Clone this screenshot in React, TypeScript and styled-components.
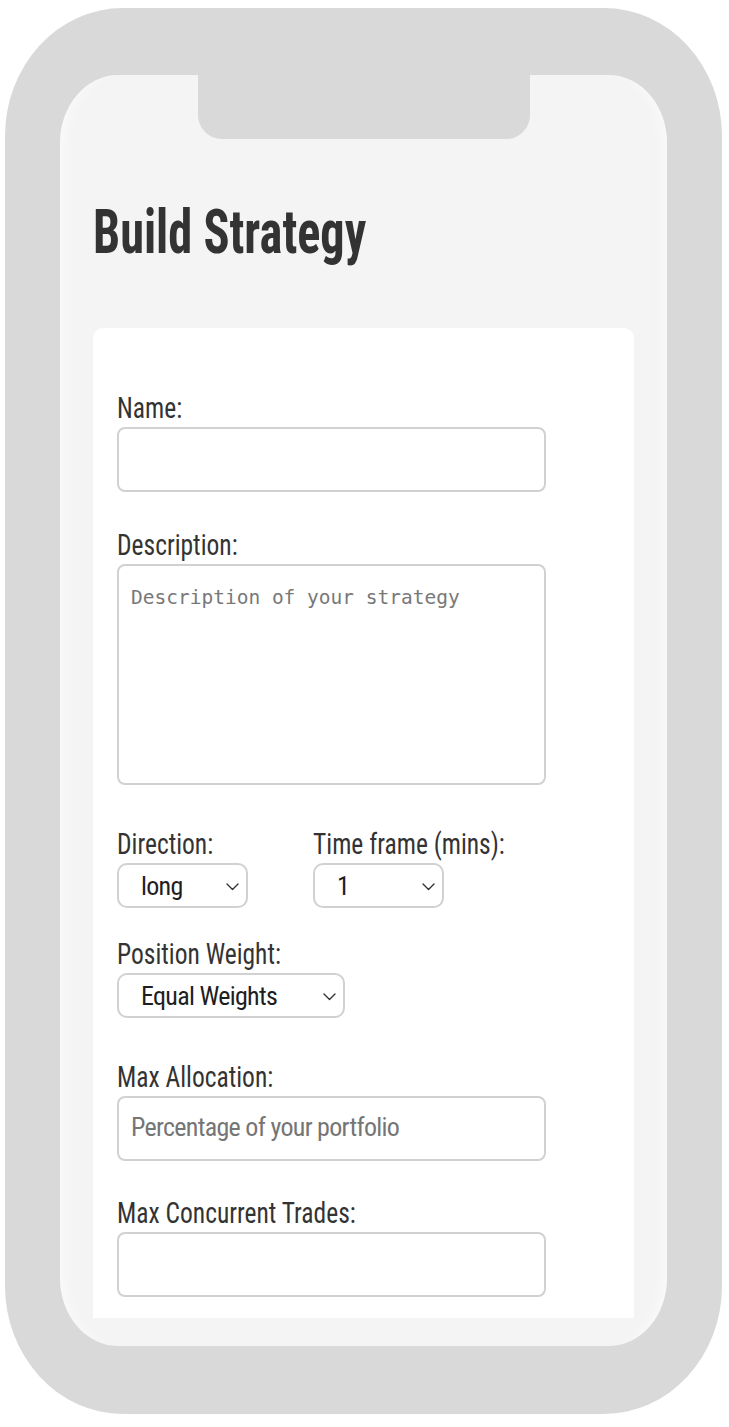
import React from "react";
import styled, { createGlobalStyle } from "styled-components";

const GlobalStyle = createGlobalStyle`
  html, body {
    margin: 0;
    padding: 0;
    background: #ffffff;
  }
  body {
    font-family: Roboto, "Liberation Sans", sans-serif;
    color: #333333;
  }
  * {
    box-sizing: border-box;
  }
`;

const Phone = styled.div`
  width: 717px;
  margin: 8px 0 0 5px;
  padding: 67px 55px 68px;
  background: #d9d9d9;
  border-radius: 118px / 128px;
`;

const Screen = styled.div`
  position: relative;
  display: flex;
  flex-direction: column;
  height: 1271px;
  padding-bottom: 28px;
  background: #f4f4f5;
  border-radius: 58px / 68px;
  overflow: hidden;
  box-shadow: inset 14px 0 18px -14px rgba(255, 255, 255, 0.9),
    inset -14px 0 18px -14px rgba(255, 255, 255, 0.9);
`;

const Notch = styled.div`
  position: absolute;
  top: 0;
  left: 50%;
  width: 332px;
  height: 64px;
  margin-left: -166px;
  background: #d9d9d9;
  border-radius: 0 0 24px 24px;
  z-index: 2;
`;

const ScrollArea = styled.div`
  flex: 1;
  min-height: 0;
  overflow: hidden;
  padding: 121px 33px 0;
`;

const Title = styled.h1`
  margin: 0;
  font-family: Roboto, "Liberation Sans", sans-serif;
  font-stretch: 75%;
  font-weight: 700;
  font-size: 62px;
  line-height: 72px;
  color: #333333;
  transform: scaleX(0.78);
  transform-origin: left center;
  white-space: nowrap;
`;

const Card = styled.form`
  margin-top: 60px;
  padding: 62px 24px 60px;
  background: #ffffff;
  border-radius: 10px;
`;

const Field = styled.div<{ $mt?: number }>`
  display: flex;
  flex-direction: column;
  align-items: flex-start;
  gap: 1px;
  margin-top: ${(p) => p.$mt ?? 0}px;
`;

const Row = styled.div<{ $mt?: number }>`
  display: grid;
  grid-template-columns: 196px auto;
  margin-top: ${(p) => p.$mt ?? 0}px;
`;

const Label = styled.label`
  display: block;
  font-family: Roboto, "Liberation Sans", sans-serif;
  font-stretch: 75%;
  font-weight: 400;
  font-size: 30px;
  line-height: 36px;
  color: #333333;
  transform: scaleX(0.85);
  transform-origin: left center;
  white-space: nowrap;
`;

const controlFont = `
  font-family: Roboto, "Liberation Sans", sans-serif;
  font-stretch: 75%;
  font-size: 26px;
  letter-spacing: -0.7px;
`;

const TextInput = styled.input`
  width: 429px;
  height: 65px;
  padding: 0 12px 4px;
  background: #ffffff;
  border: 2px solid #d1d1d1;
  border-radius: 8px;
  color: #222222;
  outline: none;
  ${controlFont}

  &::placeholder {
    color: #757575;
  }
`;

const TextArea = styled.textarea`
  width: 429px;
  height: 221px;
  padding: 20px 12px;
  background: #ffffff;
  border: 2px solid #d1d1d1;
  border-radius: 8px;
  resize: none;
  outline: none;
  font-family: "DejaVu Sans Mono", "Liberation Mono", monospace;
  font-size: 19.5px;
  color: #222222;

  &::placeholder {
    color: #787878;
  }
`;

const SelectWrap = styled.div<{ $w: number }>`
  position: relative;
  width: ${(p) => p.$w}px;
  height: 45px;
`;

const Select = styled.select`
  appearance: none;
  -webkit-appearance: none;
  width: 100%;
  height: 100%;
  padding: 0 30px 0 22px;
  background: #ffffff;
  border: 2px solid #d1d1d1;
  border-radius: 10px;
  color: #1e1e1e;
  outline: none;
  ${controlFont}
`;

const Chevron = styled.svg`
  position: absolute;
  right: 9px;
  top: 50%;
  width: 13px;
  height: 8px;
  margin-top: -3px;
  pointer-events: none;
`;

function ChevronIcon() {
  return (
    <Chevron viewBox="0 0 13 8" fill="none">
      <polyline
        points="1,1 6.5,6.5 12,1"
        stroke="#333333"
        strokeWidth="1.4"
        strokeLinecap="round"
        strokeLinejoin="round"
      />
    </Chevron>
  );
}

function Dropdown({
  width,
  options,
  id,
}: {
  width: number;
  options: string[];
  id: string;
}) {
  return (
    <SelectWrap $w={width}>
      <Select id={id} defaultValue={options[0]}>
        {options.map((o) => (
          <option key={o} value={o}>
            {o}
          </option>
        ))}
      </Select>
      <ChevronIcon />
    </SelectWrap>
  );
}

export default function App() {
  return (
    <>
      <GlobalStyle />
      <Phone>
        <Screen>
          <Notch />
          <ScrollArea>
            <Title>Build Strategy</Title>
            <Card onSubmit={(e) => e.preventDefault()}>
              <Field>
                <Label htmlFor="name">Name:</Label>
                <TextInput id="name" type="text" />
              </Field>
              <Field $mt={35}>
                <Label htmlFor="description">Description:</Label>
                <TextArea
                  id="description"
                  placeholder="Description of your strategy"
                />
              </Field>
              <Row $mt={41}>
                <Field>
                  <Label htmlFor="direction">Direction:</Label>
                  <Dropdown id="direction" width={131} options={["long", "short"]} />
                </Field>
                <Field>
                  <Label htmlFor="timeframe">Time frame (mins):</Label>
                  <Dropdown id="timeframe" width={131} options={["1", "5", "15", "30", "60"]} />
                </Field>
              </Row>
              <Field $mt={28}>
                <Label htmlFor="weight">Position Weight:</Label>
                <Dropdown id="weight" width={228} options={["Equal Weights", "Custom Weights"]} />
              </Field>
              <Field $mt={41}>
                <Label htmlFor="allocation">Max Allocation:</Label>
                <TextInput
                  id="allocation"
                  type="text"
                  placeholder="Percentage of your portfolio"
                />
              </Field>
              <Field $mt={34}>
                <Label htmlFor="trades">Max Concurrent Trades:</Label>
                <TextInput id="trades" type="text" />
              </Field>
            </Card>
          </ScrollArea>
        </Screen>
      </Phone>
    </>
  );
}
